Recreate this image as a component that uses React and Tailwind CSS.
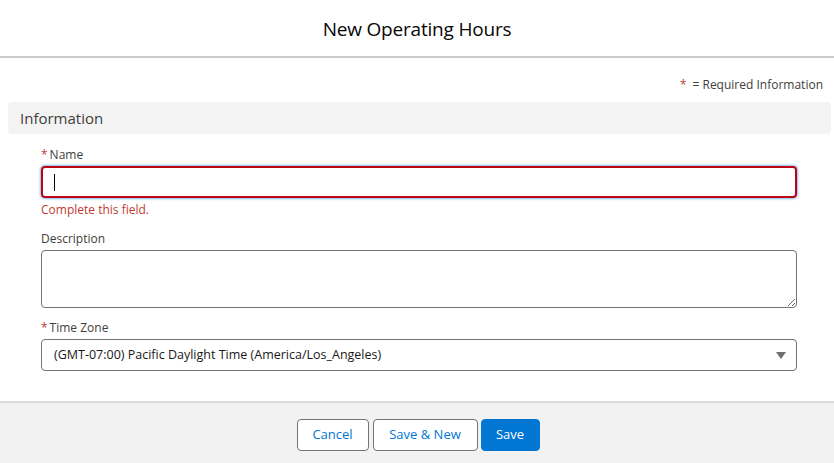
const font = { fontFamily: '"Open Sans", "Noto Sans", sans-serif' };

const Label = ({ required, children }) => (
  <label className="flex items-center text-[12px] leading-[18px] text-[#3e3e3c]">
    {required && <abbr className="mr-[2px] text-[#c23934] no-underline">*</abbr>}
    {children}
  </label>
);

export default function App() {
  return (
    <div style={font} className="flex h-[463px] w-[834px] flex-col bg-white">
      <header className="flex h-[58px] shrink-0 items-center justify-center border-b-2 border-[#c9c9c9] pt-[2px]">
        <h1 className="text-[19px] tracking-[-0.2px] text-[#080707]">New Operating Hours</h1>
      </header>

      <main className="flex-1 pl-[8px] pr-[3px] pt-[18px]">
        <p className="pr-[8px] text-right text-[12px] leading-[18px] text-[#3e3e3c]">
          <span className="mr-[6px] text-[#c23934]">*</span>= Required Information
        </p>
        <div className="mt-[8px] flex h-[32px] items-center rounded-[4px] bg-[#f3f3f3] px-[12px] text-[15px] text-[#3e3e3c]">
          Information
        </div>

        <div className="pl-[33px] pr-[34px] pt-[12px]">
          <Label required>Name</Label>
          <div className="mt-[2px] flex h-[32px] items-center rounded-[4px] border-2 border-[#ba0517] px-[11px] shadow-[0_0_3px_#0176d3]">
            <span className="h-[17px] w-px bg-black" />
          </div>
          <p className="mt-[3px] text-[12px] leading-[18px] text-[#c23934]">Complete this field.</p>

          <div className="mt-[11px]">
            <Label>Description</Label>
            <textarea className="mt-[2px] block h-[58px] w-full rounded-[4px] border border-[#747474] outline-none" />
          </div>

          <div className="mt-[11px]">
            <Label required>Time Zone</Label>
            <div className="mt-[2px] flex h-[32px] items-center justify-between rounded-[4px] border border-[#747474] pl-[12px] pr-[10px] text-[12.5px] text-[#181818]">
              <span>(GMT-07:00) Pacific Daylight Time (America/Los_Angeles)</span>
              <svg width="10" height="7" viewBox="0 0 10 7">
                <path d="M0 0h10L5 7z" fill="#706e6b" />
              </svg>
            </div>
          </div>
        </div>
      </main>

      <footer className="flex h-[62px] shrink-0 items-center justify-center gap-[4px] border-t-2 border-[#dddbda] bg-[#f3f2f2] pt-[4px] pl-[2px]">
        <button className="h-[32px] w-[72px] rounded-[4px] border border-[#747474] bg-white text-[13px] text-[#0176d3]">
          Cancel
        </button>
        <button className="h-[32px] w-[105px] rounded-[4px] border border-[#747474] bg-white text-[13px] text-[#0176d3]">
          Save &amp; New
        </button>
        <button className="ml-[-1px] h-[32px] w-[59px] rounded-[4px] border border-[#0176d3] bg-[#0176d3] text-[13px] text-white">
          Save
        </button>
      </footer>
    </div>
  );
}
